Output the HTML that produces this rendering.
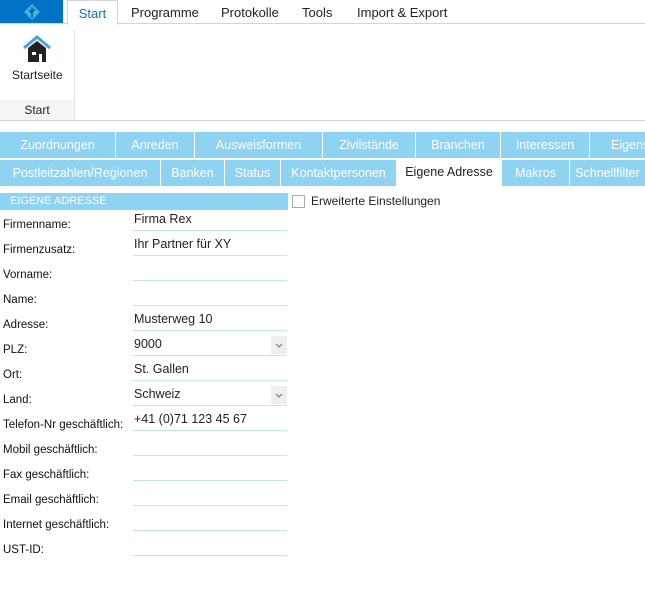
<!DOCTYPE html>
<html><head><meta charset="utf-8"><style>
body{margin:0;width:645px;height:591px;background:#fff;font-family:"Segoe UI","Liberation Sans",sans-serif;position:relative;overflow:hidden;color:#222}
.a{position:absolute}
.tab{position:absolute;height:26px;line-height:26px;background:#8ed3f1;color:#fff;font-size:12.5px;text-align:center;white-space:nowrap;overflow:hidden}
.lbl{position:absolute;left:3px;font-size:11.5px;color:#111}
.val{position:absolute;left:134px;font-size:12.5px;color:#222}
.ul{position:absolute;left:133px;width:154px;height:1px;background:#bfe4f3}
.dd{position:absolute;left:271px;width:16px;height:18px;background:#eee}
</style></head><body>
<div class="a" style="left:0;top:0;width:63px;height:24px;background:#0072c6"></div>
<svg class="a" style="left:23px;top:3px" width="18" height="18" viewBox="0 0 18 18"><path d="M9 1L17 9L9 17L1 9Z" fill="#3fb3e8"/><path d="M9 4V15M6 7L9 10M12 6L9 9" stroke="#0b5a8c" stroke-width="1.5" fill="none"/></svg>
<div class="a" style="left:0;top:23px;width:645px;height:1px;background:#d5d5d5"></div>
<div class="a" style="left:67px;top:0;width:49px;height:24px;border:1px solid #d5d5d5;border-bottom:none;background:#fff;color:#1e6fc0;font-size:13px;text-align:center;line-height:25px">Start</div>
<div class="a" style="left:131px;top:0;font-size:13px;line-height:26px">Programme</div>
<div class="a" style="left:221px;top:0;font-size:13px;line-height:26px">Protokolle</div>
<div class="a" style="left:302px;top:0;font-size:13px;line-height:26px">Tools</div>
<div class="a" style="left:357px;top:0;font-size:13px;line-height:26px">Import &amp; Export</div>
<div class="a" style="left:74px;top:30px;width:1px;height:90px;background:#e0e0e0"></div>
<svg class="a" style="left:22px;top:35px" width="30" height="28" viewBox="0 0 30 28"><path d="M2 13L15 2L28 13" stroke="#4aa3df" stroke-width="3" fill="none"/><path d="M6 13L15 6L24 13V27H6Z" fill="#222"/><rect x="10" y="17" width="4" height="3" fill="#fff"/><rect x="17" y="19" width="3" height="8" fill="#fff"/></svg>
<div class="a" style="left:12px;top:68px;font-size:12px">Startseite</div>
<div class="a" style="left:0;top:100px;width:74px;height:20px;background:#f5f5f5;font-size:12px;text-align:center;line-height:20px">Start</div>
<div class="a" style="left:0;top:120px;width:645px;height:1px;background:#d5d5d5"></div>

<div class="tab" style="left:0;top:132px;width:115px">Zuordnungen</div>
<div class="tab" style="left:116px;top:132px;width:78px">Anreden</div>
<div class="tab" style="left:195px;top:132px;width:127px">Ausweisformen</div>
<div class="tab" style="left:323px;top:132px;width:92px">Zivilstände</div>
<div class="tab" style="left:416px;top:132px;width:84px">Branchen</div>
<div class="tab" style="left:501px;top:132px;width:88px">Interessen</div>
<div class="tab" style="left:590px;top:132px;width:55px;text-align:left;padding-left:21px;box-sizing:border-box">Eigens</div>
<div class="tab" style="left:0;top:160px;width:160px">Postleitzahlen/Regionen</div>
<div class="tab" style="left:161px;top:160px;width:63px">Banken</div>
<div class="tab" style="left:225px;top:160px;width:55px">Status</div>
<div class="tab" style="left:281px;top:160px;width:115px">Kontaktpersonen</div>
<div class="tab" style="left:397px;top:159px;width:104px;height:27px;background:#fff;color:#222">Eigene Adresse</div>
<div class="tab" style="left:502px;top:160px;width:67px">Makros</div>
<div class="tab" style="left:570px;top:160px;width:75px">Schnellfilter</div>

<div class="a" style="left:0;top:193px;width:288px;height:17px;background:#8ed3f1;color:#fff;font-size:11px;line-height:17px;padding-left:10px;box-sizing:border-box">EIGENE ADRESSE</div>
<div class="a" style="left:292px;top:195px;width:11px;height:11px;border:1px solid #aaa"></div>
<div class="a" style="left:311px;top:194px;font-size:12px">Erweiterte Einstellungen</div>

<div class="lbl" style="top:219px">Firmenname:</div><div class="val" style="top:212px">Firma Rex</div><div class="ul" style="top:230px"></div>
<div class="lbl" style="top:244px">Firmenzusatz:</div><div class="val" style="top:237px">Ihr Partner für XY</div><div class="ul" style="top:255px"></div>
<div class="lbl" style="top:269px">Vorname:</div><div class="ul" style="top:280px"></div>
<div class="lbl" style="top:294px">Name:</div><div class="ul" style="top:305px"></div>
<div class="lbl" style="top:319px">Adresse:</div><div class="val" style="top:312px">Musterweg 10</div><div class="ul" style="top:330px"></div>
<div class="lbl" style="top:344px">PLZ:</div><div class="val" style="top:337px">9000</div><div class="dd" style="top:336px"><svg width="16" height="18"><path d="M5 8L8 11L11 8" stroke="#888" stroke-width="1.3" fill="none"/></svg></div><div class="ul" style="top:355px"></div>
<div class="lbl" style="top:369px">Ort:</div><div class="val" style="top:362px">St. Gallen</div><div class="ul" style="top:380px"></div>
<div class="lbl" style="top:394px">Land:</div><div class="val" style="top:387px">Schweiz</div><div class="dd" style="top:386px"><svg width="16" height="18"><path d="M5 8L8 11L11 8" stroke="#888" stroke-width="1.3" fill="none"/></svg></div><div class="ul" style="top:405px"></div>
<div class="lbl" style="top:419px">Telefon-Nr geschäftlich:</div><div class="val" style="top:412px">+41 (0)71 123 45 67</div><div class="ul" style="top:430px"></div>
<div class="lbl" style="top:444px">Mobil geschäftlich:</div><div class="ul" style="top:455px"></div>
<div class="lbl" style="top:469px">Fax geschäftlich:</div><div class="ul" style="top:480px"></div>
<div class="lbl" style="top:494px">Email geschäftlich:</div><div class="ul" style="top:505px"></div>
<div class="lbl" style="top:519px">Internet geschäftlich:</div><div class="ul" style="top:530px"></div>
<div class="lbl" style="top:544px">UST-ID:</div><div class="ul" style="top:555px"></div>
</body></html>
